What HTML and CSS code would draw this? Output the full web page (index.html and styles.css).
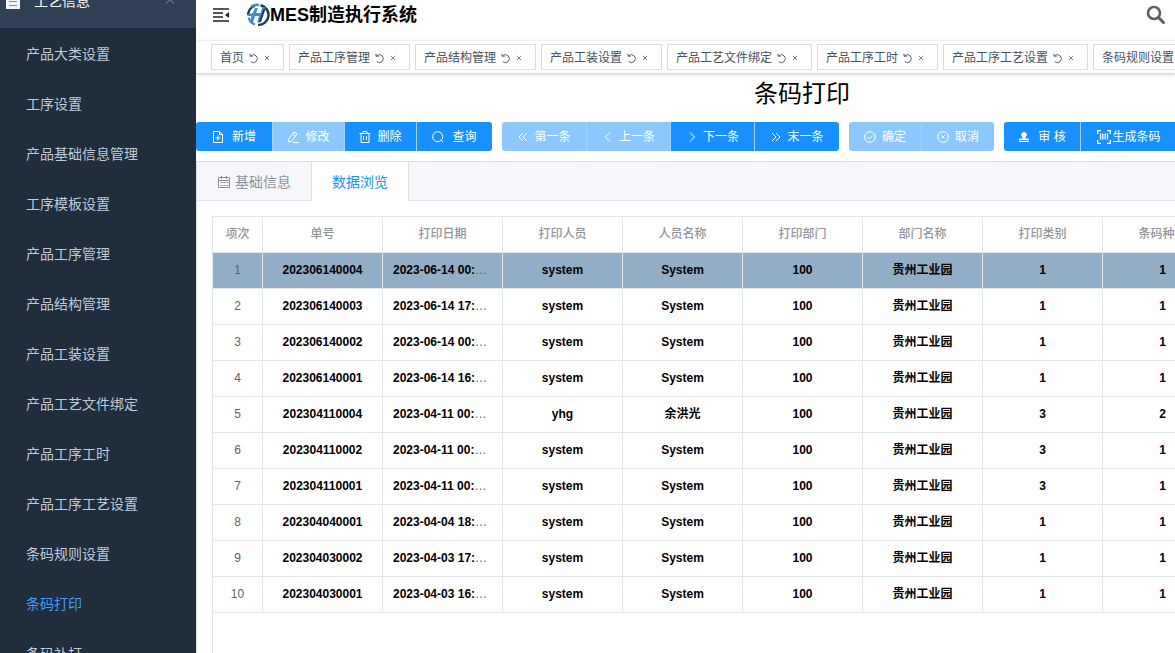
FILE: index.html
```html
<!DOCTYPE html>
<html lang="zh-CN">
<head>
<meta charset="utf-8">
<title>MES制造执行系统</title>
<link rel="stylesheet" href="styles.css">
</head>
<body>
<svg class="sprite" aria-hidden="true">
  <symbol id="i-refresh" viewBox="0 0 12 12"><path d="M3 3a4.300 4.300 0 1 1 0 6.400M2.200.8v2.700h3"/></symbol>
  <symbol id="i-close" viewBox="0 0 6 6"><path d="M.8.8l4.400 4.400M5.200.8.8 5.200"/></symbol>
</svg>
<div class="app">
  <aside class="sidebar">
    <nav class="menu">
      <a class="menu-parent" href="#">
        <svg class="doc-icon" viewBox="0 0 14 16"><path fill="#f3f6fa" d="M0 0h14v16H0z"/><path stroke="#7b8da5" d="M3 4.500h8M3 8.500h8M3 12.500h8"/></svg>
        <span>工艺信息</span>
        <svg class="caret" viewBox="0 0 12 8"><path d="M2 6.500 6 2.500l4 4"/></svg>
      </a>
      <a class="menu-item" href="#">产品大类设置</a>
      <a class="menu-item" href="#">工序设置</a>
      <a class="menu-item" href="#">产品基础信息管理</a>
      <a class="menu-item" href="#">工序模板设置</a>
      <a class="menu-item" href="#">产品工序管理</a>
      <a class="menu-item" href="#">产品结构管理</a>
      <a class="menu-item" href="#">产品工装设置</a>
      <a class="menu-item" href="#">产品工艺文件绑定</a>
      <a class="menu-item" href="#">产品工序工时</a>
      <a class="menu-item" href="#">产品工序工艺设置</a>
      <a class="menu-item" href="#">条码规则设置</a>
      <a class="menu-item active" href="#">条码打印</a>
      <a class="menu-item" href="#">条码补打</a>
    </nav>
  </aside>
  <main class="main">
    <header class="topbar">
      <button class="icon-btn" aria-label="收起菜单"><svg class="fold" viewBox="0 0 16 14"><path stroke="#222" stroke-width="1.600" d="M0 1h16M0 5h10M0 9h10M0 13h16"/><path fill="#222" d="M16 4v6l-4-3z"/></svg></button>
      <svg class="logo" viewBox="0 0 24 24">
        <path fill="none" stroke="#17375c" stroke-width="2.400" d="M2.200 12A9.800 9.800 0 0 1 9 2.600M14.500 2.300A9.900 9.900 0 0 1 12 21.900"/>
        <path fill="none" stroke="#3f8fcf" stroke-width="2.400" d="M5 3.800A9.800 9.800 0 0 1 13 2"/>
        <path fill="#3f8fcf" d="M9 5h3l-2 5h4.500l2-6h3l-5.300 15.500h-3L13 13H9L6.500 21.500 2.500 18l1.500-.5L5.500 13H1.300l1.500-2.500h3.700z"/>
        <path fill="#17375c" d="M17.500 6h2L15 19h-2z"/>
        <path fill="none" stroke="#3f8fcf" stroke-width="2.200" d="M2.500 14.500A10 10 0 0 0 9 21.500"/>
      </svg>
      <h1 class="brand">MES制造执行系统</h1>
      <button class="icon-btn search" aria-label="搜索"><svg viewBox="0 0 20 20"><circle cx="8" cy="8" r="6" fill="none" stroke="#5a5e66" stroke-width="2.500"/><path stroke="#5a5e66" stroke-width="3" stroke-linecap="round" d="m12.800 12.800 4.700 4.700"/></svg></button>
    </header>
    <nav class="tags">
      <span class="tag"><a href="#">首页</a><button aria-label="刷新"><svg class="re"><use href="#i-refresh"/></svg></button><button aria-label="关闭"><svg class="cl"><use href="#i-close"/></svg></button></span>
      <span class="tag"><a href="#">产品工序管理</a><button aria-label="刷新"><svg class="re"><use href="#i-refresh"/></svg></button><button aria-label="关闭"><svg class="cl"><use href="#i-close"/></svg></button></span>
      <span class="tag"><a href="#">产品结构管理</a><button aria-label="刷新"><svg class="re"><use href="#i-refresh"/></svg></button><button aria-label="关闭"><svg class="cl"><use href="#i-close"/></svg></button></span>
      <span class="tag"><a href="#">产品工装设置</a><button aria-label="刷新"><svg class="re"><use href="#i-refresh"/></svg></button><button aria-label="关闭"><svg class="cl"><use href="#i-close"/></svg></button></span>
      <span class="tag"><a href="#">产品工艺文件绑定</a><button aria-label="刷新"><svg class="re"><use href="#i-refresh"/></svg></button><button aria-label="关闭"><svg class="cl"><use href="#i-close"/></svg></button></span>
      <span class="tag"><a href="#">产品工序工时</a><button aria-label="刷新"><svg class="re"><use href="#i-refresh"/></svg></button><button aria-label="关闭"><svg class="cl"><use href="#i-close"/></svg></button></span>
      <span class="tag"><a href="#">产品工序工艺设置</a><button aria-label="刷新"><svg class="re"><use href="#i-refresh"/></svg></button><button aria-label="关闭"><svg class="cl"><use href="#i-close"/></svg></button></span>
      <span class="tag"><a href="#">条码规则设置</a><button aria-label="刷新"><svg class="re"><use href="#i-refresh"/></svg></button><button aria-label="关闭"><svg class="cl"><use href="#i-close"/></svg></button></span>
    </nav>
    <section class="workspace">
      <h2 class="title">条码打印</h2>
      <div class="toolbar">
        <div class="group">
          <button class="btn wide"><svg viewBox="0 0 12 12"><path d="M1.500.5h6l3 3v8h-9zM7.500.5v3h3M6 4.500v5M3.500 7h5"/></svg>新增</button>
          <button class="btn" disabled><svg viewBox="0 0 12 12"><path d="M1.500 8.500 7 1l3 2-5.500 7.500-3 .5zM5.500 3l3 2M6 11.500h6"/></svg>修改</button>
          <button class="btn"><svg viewBox="0 0 12 12"><path d="M.5 2.500h11M2 2.500v9h8v-9M4 2.500v-2h4v2M4.500 5v4M7.500 5v4"/></svg>删除</button>
          <button class="btn wide"><svg viewBox="0 0 12 12"><circle cx="5.700" cy="5.700" r="5"/><path d="m9.300 9.300 2 2"/></svg>查询</button>
        </div>
        <div class="group">
          <button class="btn step" disabled><svg viewBox="0 0 12 12"><path d="M6 2 2 6l4 4M10 2 6 6l4 4"/></svg>第一条</button>
          <button class="btn step" disabled><svg viewBox="0 0 12 12"><path d="M8 1.500 3.500 6 8 10.500"/></svg>上一条</button>
          <button class="btn step"><svg viewBox="0 0 12 12"><path d="M4 1.500 8.500 6 4 10.500"/></svg>下一条</button>
          <button class="btn step last"><svg viewBox="0 0 12 12"><path d="m2 2 4 4-4 4M6 2l4 4-4 4"/></svg>末一条</button>
        </div>
        <div class="group">
          <button class="btn" disabled><svg viewBox="0 0 12 12"><circle cx="6" cy="6" r="5.300"/><path d="m3.500 6 2 2 3.200-3.500"/></svg>确定</button>
          <button class="btn cancel" disabled><svg viewBox="0 0 12 12"><circle cx="6" cy="6" r="5.300"/><path d="m4.300 4.300 3.400 3.400M7.700 4.300 4.300 7.700"/></svg>取消</button>
        </div>
        <div class="group">
          <button class="btn wide"><svg viewBox="0 0 12 12"><path fill="#fff" stroke="none" d="M6 1a2.700 2.700 0 0 1 1.500 5v1.500H11V9H1V7.500h3.500V6A2.700 2.700 0 0 1 6 1zM1 9.700h10V11H1z"/></svg>审 核</button>
          <button class="btn barcode"><svg viewBox="0 0 14 14"><path stroke-width="1.300" d="M.7 4V.7H4M10 .7h3.300V4M13.300 10v3.300H10M4 13.300H.7V10M3.500 3.500v6M5.800 3.500v6M8.200 3.500v6M10.500 3.500v6"/></svg>生成条码</button>
        </div>
      </div>
      <div class="panel">
        <div class="tabs" role="tablist">
          <button class="tab" role="tab"><svg viewBox="0 0 14 14"><path d="M1.500 2.500h11v10h-11zM1.500 5.500h11M4.500 1v3M9.500 1v3"/><path stroke-dasharray="2 1" d="M3.500 7.500h8M3.500 10.500h8"/></svg>基础信息</button>
          <button class="tab on" role="tab" aria-selected="true">数据浏览</button>
        </div>
        <div class="grid">
          <table>
            <colgroup><col class="c-no"><col span="8"></colgroup>
            <thead><tr><th>项次</th><th>单号</th><th>打印日期</th><th>打印人员</th><th>人员名称</th><th>打印部门</th><th>部门名称</th><th>打印类别</th><th>条码种类</th></tr></thead>
            <tbody>
              <tr class="current"><td>1</td><td><b>202306140004</b></td><td><b>2023-06-14 00:00:00</b></td><td><b>system</b></td><td><b>System</b></td><td><b>100</b></td><td><b>贵州工业园</b></td><td><b>1</b></td><td><b>1</b></td></tr>
              <tr><td>2</td><td><b>202306140003</b></td><td><b>2023-06-14 17:00:00</b></td><td><b>system</b></td><td><b>System</b></td><td><b>100</b></td><td><b>贵州工业园</b></td><td><b>1</b></td><td><b>1</b></td></tr>
              <tr><td>3</td><td><b>202306140002</b></td><td><b>2023-06-14 00:00:00</b></td><td><b>system</b></td><td><b>System</b></td><td><b>100</b></td><td><b>贵州工业园</b></td><td><b>1</b></td><td><b>1</b></td></tr>
              <tr><td>4</td><td><b>202306140001</b></td><td><b>2023-06-14 16:00:00</b></td><td><b>system</b></td><td><b>System</b></td><td><b>100</b></td><td><b>贵州工业园</b></td><td><b>1</b></td><td><b>1</b></td></tr>
              <tr><td>5</td><td><b>202304110004</b></td><td><b>2023-04-11 00:00:00</b></td><td><b>yhg</b></td><td><b>余洪光</b></td><td><b>100</b></td><td><b>贵州工业园</b></td><td><b>3</b></td><td><b>2</b></td></tr>
              <tr><td>6</td><td><b>202304110002</b></td><td><b>2023-04-11 00:00:00</b></td><td><b>system</b></td><td><b>System</b></td><td><b>100</b></td><td><b>贵州工业园</b></td><td><b>3</b></td><td><b>1</b></td></tr>
              <tr><td>7</td><td><b>202304110001</b></td><td><b>2023-04-11 00:00:00</b></td><td><b>system</b></td><td><b>System</b></td><td><b>100</b></td><td><b>贵州工业园</b></td><td><b>3</b></td><td><b>1</b></td></tr>
              <tr><td>8</td><td><b>202304040001</b></td><td><b>2023-04-04 18:00:00</b></td><td><b>system</b></td><td><b>System</b></td><td><b>100</b></td><td><b>贵州工业园</b></td><td><b>1</b></td><td><b>1</b></td></tr>
              <tr><td>9</td><td><b>202304030002</b></td><td><b>2023-04-03 17:00:00</b></td><td><b>system</b></td><td><b>System</b></td><td><b>100</b></td><td><b>贵州工业园</b></td><td><b>1</b></td><td><b>1</b></td></tr>
              <tr><td>10</td><td><b>202304030001</b></td><td><b>2023-04-03 16:00:00</b></td><td><b>system</b></td><td><b>System</b></td><td><b>100</b></td><td><b>贵州工业园</b></td><td><b>1</b></td><td><b>1</b></td></tr>
            </tbody>
          </table>
        </div>
      </div>
    </section>
  </main>
</div>
</body>
</html>
```

FILE: styles.css
```css
* { box-sizing: border-box; }
body {
  margin: 0;
  font: 12px/20px "Liberation Sans", "Noto Sans CJK SC", sans-serif;
  color: #606266;
  background: #fff;
}
a { color: inherit; text-decoration: none; }
button { font: inherit; color: inherit; background: none; border: 0; padding: 0; margin: 0; cursor: pointer; }
svg { display: block; flex: none; }
.sprite { display: none; }
.app { display: flex; height: 100vh; overflow: hidden; }

/* Sidebar */
.sidebar { flex: none; width: 196px; background: #1f2d3d; overflow: hidden; }
.menu { margin-top: -28px; font-size: 14px; }
.menu-parent { display: flex; align-items: center; height: 56px; padding: 2px 20px 0 6px; gap: 14px; background: #304156; color: #fff; }
.doc-icon { width: 14px; height: 16px; }
.caret { width: 12px; height: 8px; margin-left: auto; fill: none; stroke: #8693a3; }
.menu-item { display: flex; align-items: center; height: 50px; padding: 2px 0 0 26px; color: #bfcbd9; }
.menu-item.active { color: #409eff; }

/* Header */
.main { flex: 1; min-width: 0; display: flex; flex-direction: column; overflow: hidden; }
.topbar { flex: none; display: flex; align-items: center; height: 40px; padding: 0 9px 10px 17px; }
.fold { width: 16px; height: 14px; }
.logo { width: 24px; height: 24px; margin-left: 17px; }
.brand { margin: 0; font-size: 18px; line-height: 24px; color: #000; white-space: nowrap; }
.search { margin-left: auto; }
.search svg { width: 20px; height: 20px; }
.tags {
  flex: none; display: flex; gap: 5px; height: 34px; padding: 3px 15px;
  border-top: 1px solid #f0f0f0; border-bottom: 1px solid #d8dce5;
  box-shadow: 0 1px 3px rgba(0, 0, 0, .15);
}
.tag {
  flex: none; display: flex; align-items: center; height: 26px; padding: 2px 13px 0 8px;
  border: 1px solid #d8dce5; color: #495060; white-space: nowrap;
}
.tag .re { width: 11px; height: 11px; margin-left: 4px; fill: none; stroke: #495060; }
.tag .cl { width: 6px; height: 6px; margin-left: 5px; fill: none; stroke: #777d88; }

/* Work area */
.workspace { flex: 1; display: flex; flex-direction: column; min-width: 1212px; min-height: 0; }
.title { margin: 0; padding: 4px 0 12px; font-size: 24px; font-weight: 400; line-height: 32px; text-align: center; color: #000; }
.toolbar { display: flex; gap: 10px; }
.group { display: flex; border-radius: 3px; overflow: hidden; }
.btn {
  display: flex; align-items: center; justify-content: center; gap: 6px;
  width: 72px; height: 29px; background: #1890ff; color: #fff; white-space: nowrap;
}
.btn + .btn { border-left: 1px solid #a3d3ff; }
.btn:disabled { background: #8cc8ff; color: #fff; }
.btn svg { width: 12px; height: 12px; fill: none; stroke: #fff; }
.btn.wide { width: 76px; gap: 8px; }
.btn.step { width: 84px; gap: 5px; }
.btn.step.last { width: 85px; }
.btn.cancel { width: 73px; }
.btn.barcode { width: 97px; gap: 1px; }
.btn.barcode svg { width: 14px; height: 14px; }

/* Tabs and data */
.panel { flex: 1; display: flex; flex-direction: column; min-height: 0; margin-top: 10px; border: 1px solid #dcdfe6; border-bottom: 0; }
.tabs { flex: none; display: flex; height: 39px; background: #f5f7fa; border-bottom: 1px solid #dfe4ed; font-size: 14px; }
.tab { display: flex; align-items: center; gap: 4px; height: 39px; padding: 0 20px; color: #909399; }
.tab svg { width: 14px; height: 14px; fill: none; stroke: #909399; }
.tab.on { background: #fff; color: #1890ff; border: solid #dcdfe6; border-width: 0 1px; }
.grid { flex: 1; min-height: 0; margin: 15px 15px 0; border: 1px solid #dfe6ec; border-bottom: 0; overflow: hidden; }
table { width: 1010px; table-layout: fixed; border-collapse: separate; border-spacing: 0; text-align: center; }
col { width: 120px; }
.c-no { width: 50px; }
th, td {
  height: 36px; padding: 0 10px 2px; border: solid #dfe6ec; border-width: 0 1px 1px 0;
  overflow: hidden; text-overflow: ellipsis; white-space: nowrap;
}
th { color: #909399; font-weight: 500; }
b { color: #000; }
.current td { background: #92adc6; }
```
